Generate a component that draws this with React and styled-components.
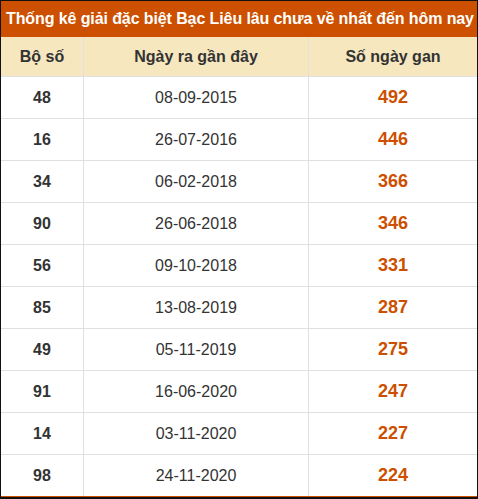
import React from "react";
import styled, { createGlobalStyle } from "styled-components";

const GlobalStyle = createGlobalStyle`
  body {
    margin: 0;
    background: #fff;
    font-family: "Liberation Sans", Arial, sans-serif;
  }
`;

const Frame = styled.div`
  width: 476px;
  border: 1px solid #111;
  border-bottom: 2px solid #111;
  background: #fff;
`;

const Title = styled.div`
  background: #cc5000;
  color: #fff;
  font-weight: bold;
  font-size: 16px;
  letter-spacing: -0.1px;
  height: 36px;
  line-height: 36px;
  padding-left: 5px;
  white-space: nowrap;
  overflow: hidden;
`;

const Row = styled.div`
  display: grid;
  grid-template-columns: 82px 225px 1fr;
  height: ${(p) => (p.$head ? 40 : 42)}px;
  background: ${(p) => (p.$head ? "#f6e7bf" : "#fff")};
  border-bottom: 1px solid ${(p) => (p.$last ? "#cc5000" : "#e0e0e0")};
  box-sizing: border-box;
`;

const Cell = styled.div`
  display: flex;
  align-items: center;
  justify-content: center;
  border-left: ${(p) => (p.$first ? "none" : "1px solid #e0e0e0")};
  font-size: ${(p) => (p.$gan ? 18 : 16)}px;
  font-weight: ${(p) => (p.$bold ? "bold" : "normal")};
  color: ${(p) => (p.$gan ? "#cc5000" : "#333")};
`;

const rows = [
  ["48", "08-09-2015", "492"],
  ["16", "26-07-2016", "446"],
  ["34", "06-02-2018", "366"],
  ["90", "26-06-2018", "346"],
  ["56", "09-10-2018", "331"],
  ["85", "13-08-2019", "287"],
  ["49", "05-11-2019", "275"],
  ["91", "16-06-2020", "247"],
  ["14", "03-11-2020", "227"],
  ["98", "24-11-2020", "224"],
];

export default function App() {
  return (
    <>
      <GlobalStyle />
      <Frame>
        <Title>Thống kê giải đặc biệt Bạc Liêu lâu chưa về nhất đến hôm nay</Title>
        <Row $head>
          <Cell $first $bold>Bộ số</Cell>
          <Cell $bold>Ngày ra gần đây</Cell>
          <Cell $bold>Số ngày gan</Cell>
        </Row>
        {rows.map(([num, date, gan], i) => (
          <Row key={num} $last={i === rows.length - 1}>
            <Cell $first $bold>{num}</Cell>
            <Cell>{date}</Cell>
            <Cell $bold $gan>{gan}</Cell>
          </Row>
        ))}
      </Frame>
    </>
  );
}
